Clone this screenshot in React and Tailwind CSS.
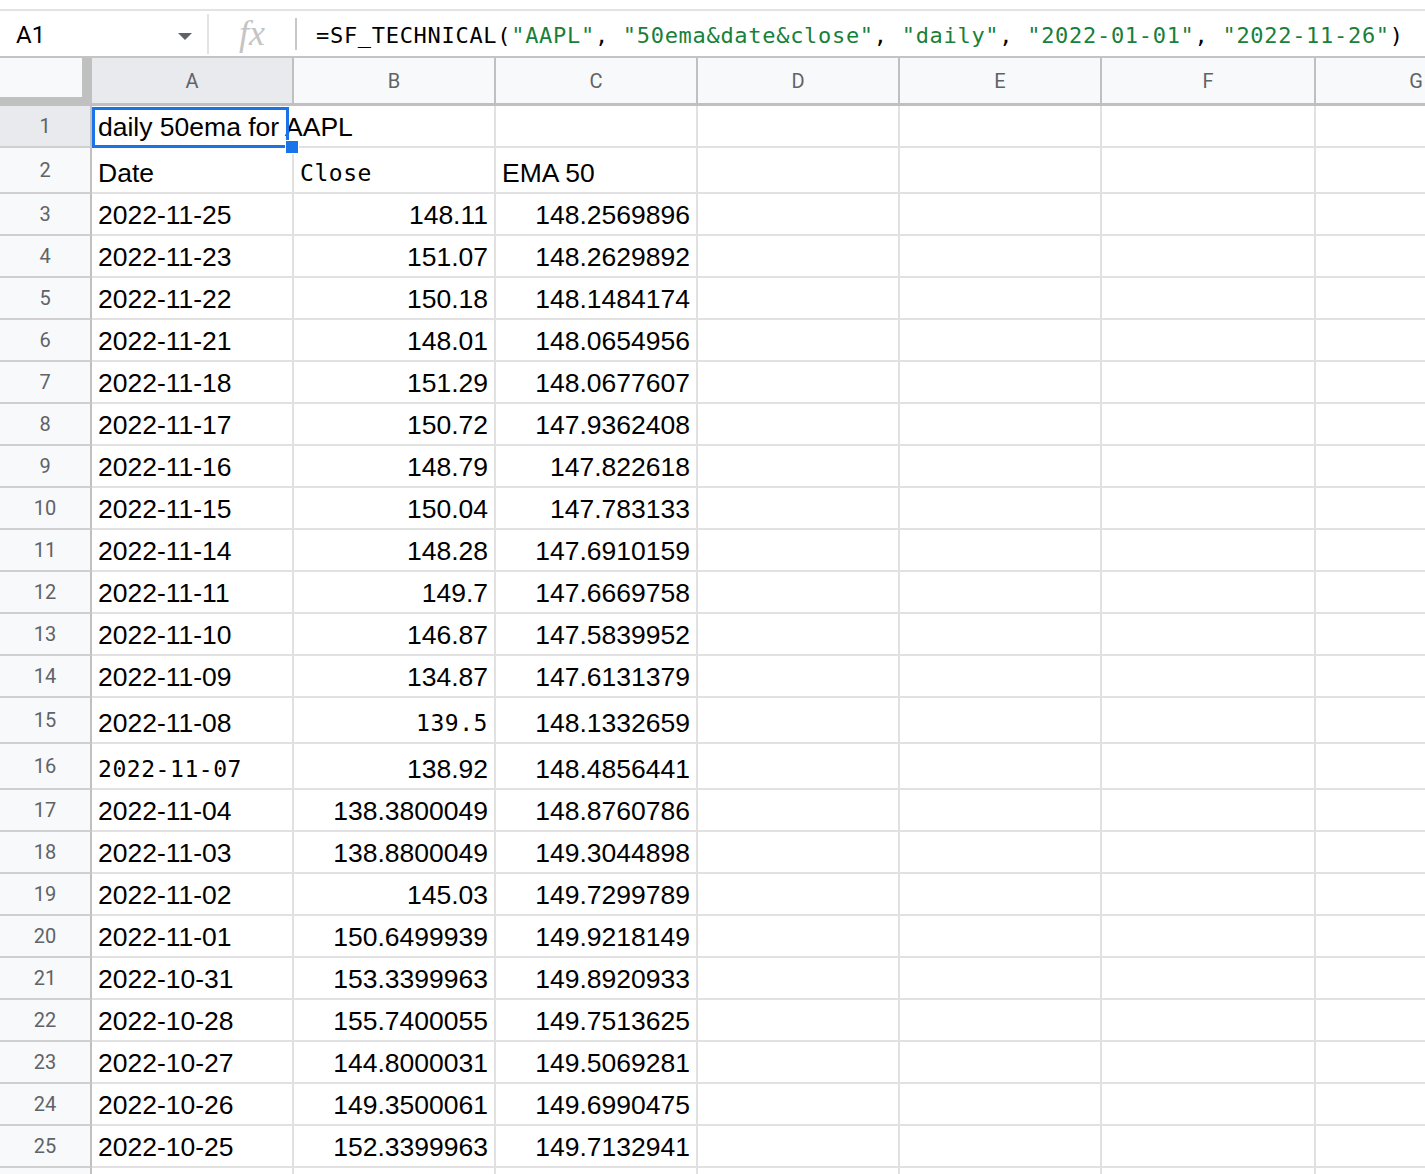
import React from 'react';

const ARIAL = "font-['Liberation_Sans',Arial,sans-serif]";
const MONO = "font-['DejaVu_Sans_Mono',monospace]";
const ROBOTO = "font-['Roboto',Arial,sans-serif]";

const COL_WIDTHS = ['w-[202px]', 'w-[202px]', 'w-[202px]', 'w-[202px]', 'w-[202px]', 'w-[214px]', 'w-[202px]'];
const LETTERS = ['A', 'B', 'C', 'D', 'E', 'F', 'G'];

// [date, close, ema, tall?, monoCols]
const ROWS = [
    ['2022-11-25', '148.11', '148.2569896'],
    ['2022-11-23', '151.07', '148.2629892'],
    ['2022-11-22', '150.18', '148.1484174'],
    ['2022-11-21', '148.01', '148.0654956'],
    ['2022-11-18', '151.29', '148.0677607'],
    ['2022-11-17', '150.72', '147.9362408'],
    ['2022-11-16', '148.79', '147.822618'],
    ['2022-11-15', '150.04', '147.783133'],
    ['2022-11-14', '148.28', '147.6910159'],
    ['2022-11-11', '149.7', '147.6669758'],
    ['2022-11-10', '146.87', '147.5839952'],
    ['2022-11-09', '134.87', '147.6131379'],
    ['2022-11-08', '139.5', '148.1332659', true, [1]],
    ['2022-11-07', '138.92', '148.4856441', true, [0]],
    ['2022-11-04', '138.3800049', '148.8760786'],
    ['2022-11-03', '138.8800049', '149.3044898'],
    ['2022-11-02', '145.03', '149.7299789'],
    ['2022-11-01', '150.6499939', '149.9218149'],
    ['2022-10-31', '153.3399963', '149.8920933'],
    ['2022-10-28', '155.7400055', '149.7513625'],
    ['2022-10-27', '144.8000031', '149.5069281'],
    ['2022-10-26', '149.3500061', '149.6990475'],
    ['2022-10-25', '152.3399963', '149.7132941'],
];

const Str = ({ children }) => <span className="text-[#188038]">{children}</span>;

const FormulaBar = () => (
    <div className="flex items-center h-[49px] border-t-2 border-b-2 border-t-[#e3e3e3] border-b-[#c4c4c4] bg-white">
        <div className="w-[207px] shrink-0 flex items-center justify-between pl-[16px] pr-[15px]">
            <span className={`${ROBOTO} text-[24px] text-black leading-none mt-[3px]`}>A1</span>
            <span className="mt-[6px] w-0 h-0 border-l-[7px] border-r-[7px] border-t-[7px] border-l-transparent border-r-transparent border-t-[#5f6368]"></span>
        </div>
        <div className="w-[2px] h-[40px] bg-[#e3e3e3] shrink-0"></div>
        <div className="w-[86px] shrink-0 flex justify-center">
            <span className="font-['Liberation_Serif',serif] italic text-[36px] leading-none text-[#c4c4c4] mt-[-2px]">fx</span>
        </div>
        <div className="w-[2px] h-[32px] bg-[#c9c9c9] shrink-0"></div>
        <div className={`${MONO} pl-[19px] text-[22px] tracking-[0.7px] text-black whitespace-nowrap mt-[3px]`}>
            =SF_TECHNICAL(<Str>"AAPL"</Str>, <Str>"50ema&amp;date&amp;close"</Str>, <Str>"daily"</Str>, <Str>"2022-01-01"</Str>, <Str>"2022-11-26"</Str>)
        </div>
    </div>
);

const ColumnHeader = () => (
    <div className="flex h-[48px]">
        <div className="w-[92px] shrink-0 h-[48px] bg-[#f8f9fa] border-r-[10px] border-b-[9px] border-[#c0c0c0]"></div>
        {LETTERS.map((l, i) => (
            <div
                key={l}
                className={`${COL_WIDTHS[i]} shrink-0 h-[48px] border-r-2 border-b-[3px] border-[#c0c0c0] flex items-center justify-center ${ROBOTO} text-[20px] text-[#5f6368] ${i === 0 ? 'bg-[#e8eaed]' : 'bg-[#f8f9fa]'}`}
            >
                {l}
            </div>
        ))}
    </div>
);

const Cell = ({ width, children, right, mono, noBorder }) => (
    <div
        className={`${width} shrink-0 h-full border-b-2 border-b-[#e1e1e1] border-r-2 ${noBorder ? 'border-r-transparent' : 'border-r-[#e1e1e1]'} flex items-end pb-[4px] px-[6px] whitespace-nowrap text-black ${right ? 'justify-end' : 'justify-start'} ${mono ? `${MONO} text-[23px] tracking-[0.55px] leading-[30px]` : `${ARIAL} text-[26.5px] leading-[30px]`}`}
    >
        {children}
    </div>
);

const Row = ({ num, tall, cells, selected }) => (
    <div className={`flex ${tall ? 'h-[46px]' : 'h-[42px]'}`}>
        <div
            className={`w-[92px] shrink-0 h-full border-r-2 border-b-2 border-r-[#c0c0c0] border-b-[#cfcfcf] flex items-center justify-center ${ROBOTO} text-[20px] text-[#5f6368] ${selected ? 'bg-[#e8eaed]' : 'bg-[#f8f9fa]'}`}
        >
            {num}
        </div>
        {COL_WIDTHS.map((w, i) => {
            const c = cells[i] || {};
            return (
                <Cell key={i} width={w} right={c.right} mono={c.mono} noBorder={c.noBorder}>
                    {c.text}
                </Cell>
            );
        })}
    </div>
);

export default function App() {
    return (
        <div className="w-[1425px] h-[1174px] overflow-hidden bg-white">
            <div className="h-[9px] bg-white"></div>
            <FormulaBar />
            <ColumnHeader />
            <div className="relative">
                <Row num={1} selected cells={[{ text: 'daily 50ema for AAPL', noBorder: true }]} />
                <Row
                    num={2}
                    tall
                    cells={[{ text: 'Date' }, { text: 'Close', mono: true }, { text: 'EMA 50' }]}
                />
                {ROWS.map((r, idx) => {
                    const monoCols = r[4] || [];
                    return (
                        <Row
                            key={idx}
                            num={idx + 3}
                            tall={r[3]}
                            cells={[
                                { text: r[0], mono: monoCols.includes(0) },
                                { text: r[1], right: true, mono: monoCols.includes(1) },
                                { text: r[2], right: true },
                            ]}
                        />
                    );
                })}
                {/* next row, only its top edge shows */}
                <Row num="" cells={[]} />

                {/* selection box on A1 */}
                <div className="absolute left-[92px] top-[1px] w-[197px] h-[41px] border-[3px] border-[#1a73e8] pointer-events-none"></div>
                <div className="absolute left-[285px] top-[34px] w-[14px] h-[14px] bg-[#1a73e8] border border-white"></div>
            </div>
        </div>
    );
}
